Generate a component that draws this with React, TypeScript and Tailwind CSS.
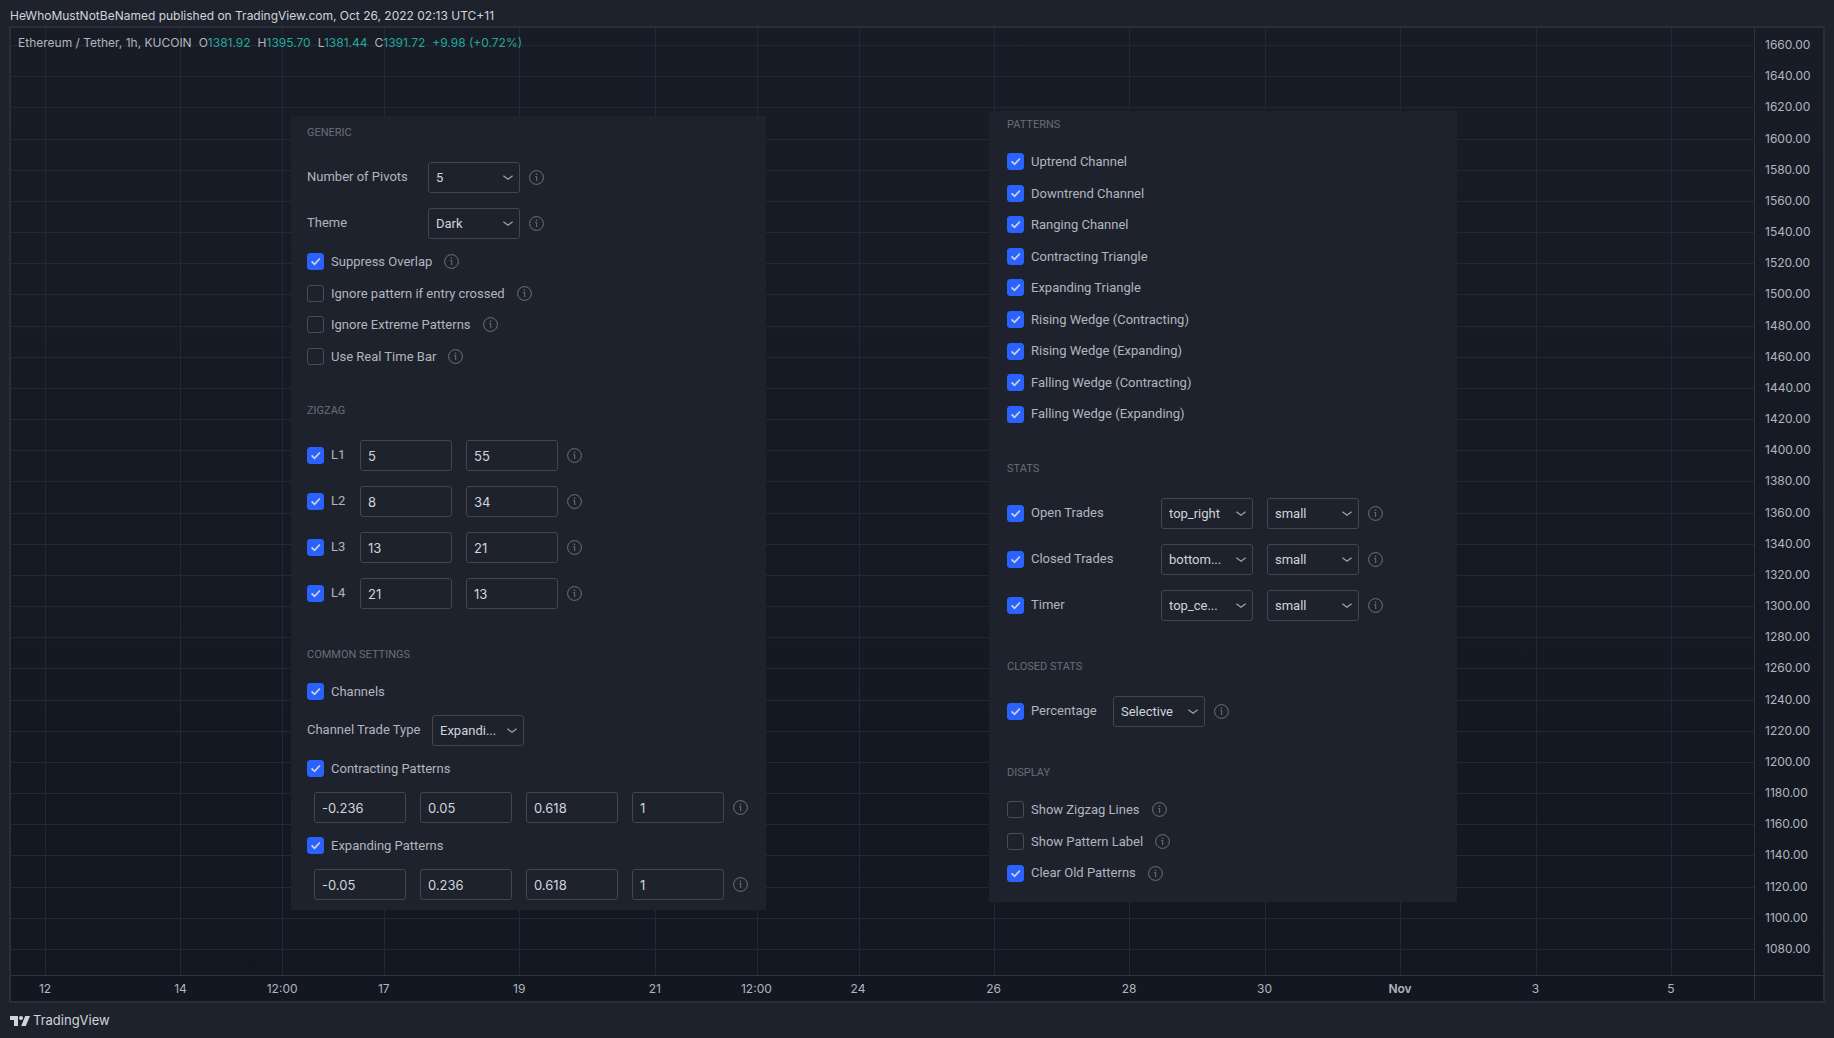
import clsx from "clsx";
import { useState } from "react";

const PRICES = Array.from({ length: 30 }, (_, i) => (1660 - i * 20).toFixed(2));

// span = distance to the next tick, in half days
const TICKS = [
  { label: "12", span: 4 },
  { label: "14", span: 3 },
  { label: "12:00", span: 3 },
  { label: "17", span: 4 },
  { label: "19", span: 4 },
  { label: "21", span: 3 },
  { label: "12:00", span: 3 },
  { label: "24", span: 4 },
  { label: "26", span: 4 },
  { label: "28", span: 4 },
  { label: "30", span: 4 },
  { label: "Nov", span: 4, bold: true },
  { label: "3", span: 4 },
  { label: "5", span: 0 },
];

const OHLC = [
  { key: "O", value: "1381.92" },
  { key: "H", value: "1395.70" },
  { key: "L", value: "1381.44" },
  { key: "C", value: "1391.72" },
];

const PATTERNS = [
  "Uptrend Channel",
  "Downtrend Channel",
  "Ranging Channel",
  "Contracting Triangle",
  "Expanding Triangle",
  "Rising Wedge (Contracting)",
  "Rising Wedge (Expanding)",
  "Falling Wedge (Contracting)",
  "Falling Wedge (Expanding)",
];

const ZIGZAGS = [
  { label: "L1", values: ["5", "55"] },
  { label: "L2", values: ["8", "34"] },
  { label: "L3", values: ["13", "21"] },
  { label: "L4", values: ["21", "13"] },
];

const STATS = [
  { label: "Open Trades", position: "top_right" },
  { label: "Closed Trades", position: "bottom..." },
  { label: "Timer", position: "top_ce..." },
];

function Info({ label }: { label: string }) {
  return (
    <button type="button" aria-label={`About ${label}`} className="ml-[9px] shrink-0 text-[#6f727c]">
      <svg width="15" height="15" viewBox="0 0 15 15" fill="none" stroke="currentColor" className="block">
        <circle cx="7.5" cy="7.5" r="6.9" />
        <path d="M6.2 6.5h1.5v4.6" />
        <circle cx="7.5" cy="4.2" r="0.8" fill="currentColor" stroke="none" />
      </svg>
    </button>
  );
}

function Checkbox({ label, checked = false, className }: { label: string; checked?: boolean; className?: string }) {
  const [on, setOn] = useState(checked);
  return (
    <label className={clsx("flex shrink-0 items-center gap-[7px]", className)}>
      <span className="relative size-[17px]">
        <input
          type="checkbox"
          checked={on}
          onChange={(e) => setOn(e.target.checked)}
          className="block size-[17px] appearance-none rounded-[3px] border border-[#4a4d58] checked:border-[#2962ff] checked:bg-[#2962ff]"
        />
        {on && (
          <svg viewBox="0 0 17 17" fill="none" stroke="#d1d4dc" strokeWidth="1.7" className="pointer-events-none absolute inset-0">
            <path d="M4.6 8.4l2.9 2.9 5.4-5.8" />
          </svg>
        )}
      </span>
      {label}
    </label>
  );
}

function Select({ label, value }: { label: string; value: string }) {
  return (
    <span className="relative w-[92px] shrink-0">
      <select
        aria-label={label}
        defaultValue={value}
        className="block h-[31px] w-full appearance-none rounded-[3px] border border-[#434651] bg-transparent pl-[7px] pt-px text-[#d1d4dc]"
      >
        <option>{value}</option>
      </select>
      <svg
        viewBox="0 0 10 6"
        fill="none"
        stroke="#a3a6af"
        strokeWidth="1.2"
        className="pointer-events-none absolute right-[7px] top-[13px] h-[6px] w-[10px]"
      >
        <path d="M0.4 0.8L5 4.2 9.6 0.8" />
      </svg>
    </span>
  );
}

function Field({ label, value }: { label: string; value: string }) {
  return (
    <input
      type="text"
      aria-label={label}
      defaultValue={value}
      className="block h-[31px] w-[92px] shrink-0 rounded-[3px] border border-[#434651] bg-transparent px-[7px] pt-px font-['Inter',sans-serif] text-[#d1d4dc]"
    />
  );
}

function Section({ title, children }: { title: string; children: React.ReactNode }) {
  return (
    <section>
      <h2 className="mb-3 text-[11px] leading-[18px] text-[#6a6d78]">{title}</h2>
      {children}
    </section>
  );
}

function Row({ children, className }: { children: React.ReactNode; className?: string }) {
  return <div className={clsx("flex h-[46px] items-center", className)}>{children}</div>;
}

function Levels({ label, values }: { label: string; values: string[] }) {
  return (
    <>
      <div className="flex h-[31px] items-center">
        <Checkbox label={label} checked />
      </div>
      <Row className="pl-[7px]">
        <div className="flex gap-[14px]">
          {values.map((value, i) => (
            <Field key={i} label={`${label} ${i + 1}`} value={value} />
          ))}
        </div>
        <Info label={label} />
      </Row>
    </>
  );
}

function InputsPanel() {
  return (
    <form className="relative mt-[88px] flex w-[475px] shrink-0 flex-col gap-[30px] bg-[#1e222d] pb-[3px] pl-4 pt-2 font-['Roboto',sans-serif]">
      <Section title="GENERIC">
        <Row>
          <span className="w-[121px]">Number of Pivots</span>
          <Select label="Number of Pivots" value="5" />
          <Info label="Number of Pivots" />
        </Row>
        <Row>
          <span className="w-[121px]">Theme</span>
          <Select label="Theme" value="Dark" />
          <Info label="Theme" />
        </Row>
        <div className="grid h-[126px] auto-rows-fr">
          {["Suppress Overlap", "Ignore pattern if entry crossed", "Ignore Extreme Patterns", "Use Real Time Bar"].map((label, i) => (
            <div key={label} className="flex items-center gap-[3px]">
              <Checkbox label={label} checked={i === 0} />
              <Info label={label} />
            </div>
          ))}
        </div>
      </Section>
      <Section title="ZIGZAG">
        {ZIGZAGS.map(({ label, values }) => (
          <Row key={label}>
            <Checkbox label={label} checked className="w-[53px]" />
            <div className="flex gap-[14px]">
              <Field label={`${label} length`} value={values[0]} />
              <Field label={`${label} depth`} value={values[1]} />
            </div>
            <Info label={label} />
          </Row>
        ))}
      </Section>
      <Section title="COMMON SETTINGS">
        <div className="flex h-[31px] items-center">
          <Checkbox label="Channels" checked />
        </div>
        <Row>
          <span className="w-[125px]">Channel Trade Type</span>
          <Select label="Channel Trade Type" value="Expandi..." />
        </Row>
        <Levels label="Contracting Patterns" values={["-0.236", "0.05", "0.618", "1"]} />
        <Levels label="Expanding Patterns" values={["-0.05", "0.236", "0.618", "1"]} />
      </Section>
    </form>
  );
}

function PatternsPanel() {
  return (
    <form className="relative mt-[83px] flex w-[468px] shrink-0 flex-col gap-[30px] bg-[#1e222d] pb-[13px] pl-[18px] pt-[5px] font-['Roboto',sans-serif]">
      <Section title="PATTERNS">
        <div className="grid h-[284px] auto-rows-fr">
          {PATTERNS.map((label) => (
            <div key={label} className="flex items-center">
              <Checkbox label={label} checked />
            </div>
          ))}
        </div>
      </Section>
      <Section title="STATS">
        {STATS.map(({ label, position }) => (
          <Row key={label}>
            <Checkbox label={label} checked className="w-[154px]" />
            <div className="flex gap-[14px]">
              <Select label={`${label} position`} value={position} />
              <Select label={`${label} size`} value="small" />
            </div>
            <Info label={label} />
          </Row>
        ))}
      </Section>
      <Section title="CLOSED STATS">
        <Row>
          <Checkbox label="Percentage" checked className="w-[106px]" />
          <Select label="Percentage" value="Selective" />
          <Info label="Percentage" />
        </Row>
      </Section>
      <Section title="DISPLAY">
        <div className="grid h-[95px] auto-rows-fr">
          {["Show Zigzag Lines", "Show Pattern Label", "Clear Old Patterns"].map((label, i) => (
            <div key={label} className="flex items-center gap-[3px]">
              <Checkbox label={label} checked={i === 2} />
              <Info label={label} />
            </div>
          ))}
        </div>
      </Section>
    </form>
  );
}

function GridLines() {
  return (
    <div className="pointer-events-none absolute inset-0">
      <div className="absolute inset-0 flex flex-col justify-between pb-[25px] pt-[17px]">
        {PRICES.map((price) => (
          <div key={price} className="h-px bg-[#242834]" />
        ))}
      </div>
      <div className="absolute inset-0 flex pl-[34px] pr-[82px]">
        {TICKS.map(({ span }, i) => (
          <div key={i} className="basis-0 border-l border-[#242834]" style={{ flexGrow: span }} />
        ))}
      </div>
    </div>
  );
}

export default function App() {
  return (
    <div className="flex min-h-screen flex-col bg-[#1e222d] font-['Inter',sans-serif] text-[13px] text-[#b2b5be]">
      <header className="flex h-[26px] items-center pl-[10px] pt-[5px] text-[12px] text-[#d1d4dc]">
        HeWhoMustNotBeNamed published on TradingView.com, Oct 26, 2022 02:13 UTC+11
      </header>

      <main className="mx-[9px] flex flex-1 flex-col border-2 border-[#2a2e39] bg-linear-to-b from-[#181c27] to-[#131722]">
        <div className="flex flex-1">
          <div className="relative flex flex-1 items-start gap-[223px] pl-[280px]">
            <GridLines />
            <div className="absolute left-[7px] top-[6px] flex gap-[7px] text-[12px] leading-[18px]">
              <span>Ethereum / Tether, 1h, KUCOIN</span>
              {OHLC.map(({ key, value }) => (
                <span key={key}>
                  {key}
                  <span className="text-[#26a69a]">{value}</span>
                </span>
              ))}
              <span className="text-[#26a69a]">+9.98 (+0.72%)</span>
            </div>
            <InputsPanel />
            <PatternsPanel />
          </div>
          <div className="flex w-[69px] flex-col justify-between border-l border-[#2f333e] pb-[16px] pl-[10px] pt-[7px] text-[12px] leading-5">
            {PRICES.map((price) => (
              <span key={price}>{price}</span>
            ))}
          </div>
        </div>
        <div className="flex h-[26px] border-t border-[#2f333e] text-[12px] leading-[26px]">
          <div className="flex flex-1 pl-[34px] pr-[83px]">
            {TICKS.map(({ label, span, bold }, i) => (
              <div key={i} className="basis-0" style={{ flexGrow: span }}>
                <div className={clsx("flex w-0 justify-center", bold && "font-semibold")}>
                  <span>{label}</span>
                </div>
              </div>
            ))}
          </div>
          <div className="w-[69px] border-l border-[#2f333e]" />
        </div>
      </main>

      <footer className="flex h-[35px] items-center gap-[3px] pl-[10px] text-[#d1d4dc]">
        <svg width="20" height="10" viewBox="0 0 20 10" fill="currentColor">
          <path d="M0 0h8v10H4V4H0z" />
          <circle cx="11" cy="2" r="2" />
          <path d="M15.2 0H20l-4.2 10h-4.6z" />
        </svg>
        TradingView
      </footer>
    </div>
  );
}
